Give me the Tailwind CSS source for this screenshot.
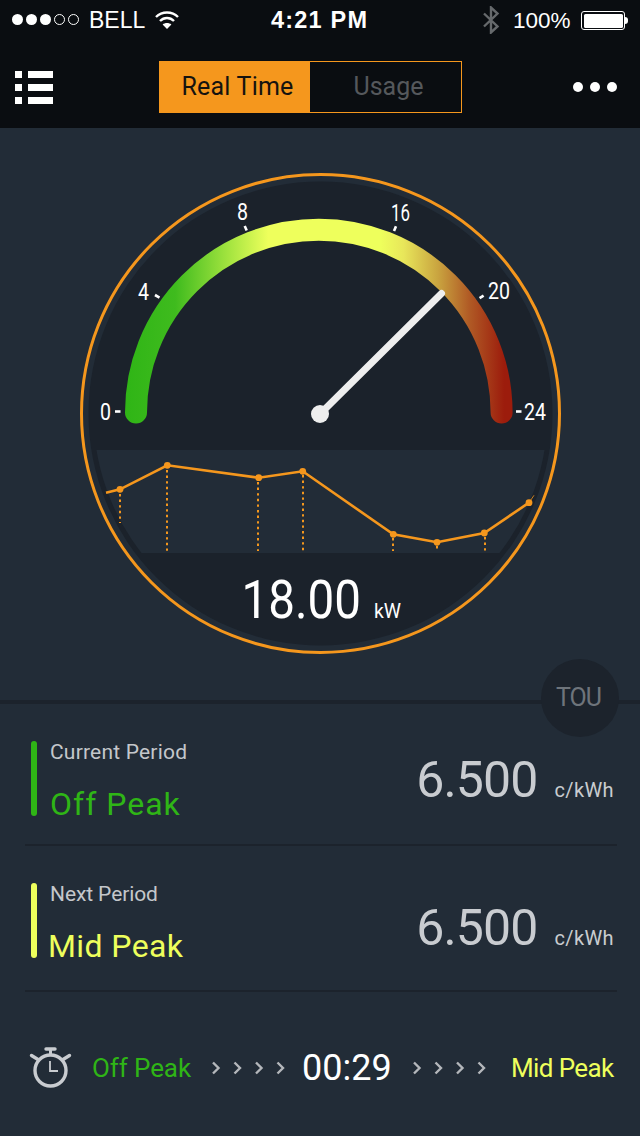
<!DOCTYPE html>
<html lang="en">

<head>
    <meta charset="UTF-8">
    <meta name="viewport" content="width=device-width, initial-scale=1.0">
    <title>Energy Monitor</title>
    <script src="https://cdn.jsdelivr.net/npm/@tailwindcss/browser@4"></script>
</head>

<body class="bg-[#222c37]">
    <div class="w-[640px] h-[1136px] flex flex-col overflow-hidden font-['Roboto',sans-serif]">

        <!-- status bar + nav -->
        <header class="h-[128px] bg-[#0a0d11] text-white">
            <div class="h-[41px] relative font-['Liberation_Sans',sans-serif] text-[22px] leading-[41px]">
                <div class="absolute left-[12px] top-[14px] flex gap-[3px]">
                    <span class="w-[11px] h-[11px] rounded-full bg-white"></span>
                    <span class="w-[11px] h-[11px] rounded-full bg-white"></span>
                    <span class="w-[11px] h-[11px] rounded-full bg-white"></span>
                    <span class="w-[11px] h-[11px] rounded-full border border-white"></span>
                    <span class="w-[11px] h-[11px] rounded-full border border-white"></span>
                </div>
                <span class="absolute left-[89px] top-0 text-[23px]">BELL</span>
                <svg class="absolute left-[154px] top-[10px]" width="26" height="20" viewBox="0 0 26 20">
                    <g fill="none" stroke="#fff" stroke-width="2.4">
                        <path d="M2 7 C8 1 18 1 24 7" />
                        <path d="M6 11 C10 7 16 7 20 11" />
                    </g>
                    <path d="M13 19 L8.6 14.4 C11 12.4 15 12.4 17.4 14.4 Z" fill="#fff" />
                </svg>
                <span class="absolute left-[271px] top-0 font-bold text-[23.5px] tracking-[1.2px]">4:21 PM</span>
                <svg class="absolute left-[482px] top-[6px]" width="18" height="28" viewBox="0 0 18 28">
                    <path d="M2 7.5 L15.5 20.5 L9 26.5 L9 1.5 L15.5 7.5 L2 20.5" fill="none" stroke="#66696c" stroke-width="2.4" />
                </svg>
                <span class="absolute left-[513px] top-0 text-[22.5px]">100%</span>
                <div class="absolute left-[581px] top-[11px] flex items-center">
                    <div class="w-[44px] h-[19px] rounded-[3px] border border-white p-[1.5px]">
                        <div class="w-full h-full rounded-[1.5px] bg-white"></div>
                    </div>
                    <div class="w-[3px] h-[7px] rounded-r-full bg-white"></div>
                </div>
            </div>
            <div class="h-[87px] relative pl-[159px] pt-[20px]">
                <div class="absolute left-[15px] top-[30px] grid grid-cols-[7px_25px] gap-x-[6px] gap-y-[6px]">
                    <span class="h-[7px] bg-white"></span><span class="h-[7px] bg-white"></span>
                    <span class="h-[7px] bg-white"></span><span class="h-[7px] bg-white"></span>
                    <span class="h-[7px] bg-white"></span><span class="h-[7px] bg-white"></span>
                </div>
                <div class="w-[303px] h-[52px] flex border border-[#f5971d] text-[25px]">
                    <div class="w-[150px] pl-[5px] bg-[#f5971d] text-[#15130f] flex items-center justify-center tracking-[0.2px]">Real Time</div>
                    <div class="flex-1 pl-[6px] text-[#55585c] flex items-center justify-center">Usage</div>
                </div>
                <div class="absolute left-[573px] top-[41px] flex gap-[7px]">
                    <span class="w-[10px] h-[10px] rounded-full bg-white"></span>
                    <span class="w-[10px] h-[10px] rounded-full bg-white"></span>
                    <span class="w-[10px] h-[10px] rounded-full bg-white"></span>
                </div>
            </div>
        </header>

        <!-- gauge -->
        <section class="h-[572px]">
            <svg class="block" width="640" height="572" viewBox="0 128 640 572">
                <defs>
                    <linearGradient id="arcGrad" gradientUnits="userSpaceOnUse" x1="125" y1="0" x2="512" y2="0">
                        <stop offset="0" stop-color="#2fb516" />
                        <stop offset="0.13" stop-color="#3fbb1e" />
                        <stop offset="0.27" stop-color="#a5e540" />
                        <stop offset="0.37" stop-color="#eeff5c" />
                        <stop offset="0.66" stop-color="#eeff5c" />
                        <stop offset="0.72" stop-color="#e8e65a" />
                        <stop offset="0.81" stop-color="#c9a33f" />
                        <stop offset="0.89" stop-color="#b05a25" />
                        <stop offset="0.98" stop-color="#9c1c0c" />
                    </linearGradient>
                    <clipPath id="bandClip">
                        <circle cx="320.5" cy="413.5" r="227" />
                    </clipPath>
                </defs>

                <circle cx="320.5" cy="413.5" r="239" fill="#222c37" stroke="#f5971d" stroke-width="3" />
                <circle cx="320.5" cy="413.5" r="232" fill="#1b222b" />
                <rect x="80" y="450" width="480" height="103" fill="#222c37" clip-path="url(#bandClip)" />

                <path d="M136 412.5 A182.8 182.8 0 0 1 501.6 412.5" fill="none" stroke="url(#arcGrad)" stroke-width="22" stroke-linecap="round" />

                <g stroke="#fff" stroke-width="2.6">
                    <path d="M115 411.5 H120.5" />
                    <path d="M155 295 L159.5 297.6" />
                    <path d="M244.7 226 L246.7 230.6" />
                    <path d="M396 226.3 L394 231" />
                    <path d="M483.6 295.6 L479.6 298.2" />
                    <path d="M516 411.5 H521.5" />
                </g>

                <g fill="#fff" font-family="Roboto, sans-serif" font-size="23">
                    <text x="100" y="420" textLength="11" lengthAdjust="spacingAndGlyphs">0</text>
                    <text x="138" y="300" textLength="11" lengthAdjust="spacingAndGlyphs">4</text>
                    <text x="237" y="220" textLength="11" lengthAdjust="spacingAndGlyphs">8</text>
                    <text x="391" y="221" textLength="19" lengthAdjust="spacingAndGlyphs">16</text>
                    <text x="488" y="299" textLength="22" lengthAdjust="spacingAndGlyphs">20</text>
                    <text x="524" y="420" textLength="22" lengthAdjust="spacingAndGlyphs">24</text>
                </g>

                <path d="M320 414 L441.5 293.5" stroke="#eeeeee" stroke-width="7" stroke-linecap="round" />
                <circle cx="320" cy="414" r="9" fill="#eeeeee" />

                <g fill="none" stroke="#f5971d" stroke-width="2" stroke-dasharray="2.4 3.2">
                    <path d="M120 494 V523" />
                    <path d="M167 470 V551" />
                    <path d="M258 482 V551" />
                    <path d="M303 475 V551" />
                    <path d="M393 538 V551" />
                    <path d="M437 546 V551" />
                    <path d="M485 537 V551" />
                </g>
                <polyline points="106,492.7 120,489.3 167.3,465.3 258.7,477.7 302.7,471.3 393.3,534.3 437,542.3 484.3,533 529,502.7" fill="none" stroke="#f5971d" stroke-width="2.6" />
                <path d="M529 502.7 L534 495.3" stroke="#f5971d" stroke-width="0.8" />
                <g fill="#f5971d">
                    <circle cx="120" cy="489.3" r="3.4" />
                    <circle cx="167.3" cy="465.3" r="3.4" />
                    <circle cx="258.7" cy="477.7" r="3.4" />
                    <circle cx="302.7" cy="471.3" r="3.4" />
                    <circle cx="393.3" cy="534.3" r="3.4" />
                    <circle cx="437" cy="542.3" r="3.4" />
                    <circle cx="484.3" cy="533" r="3.4" />
                    <circle cx="529" cy="502.7" r="3.4" />
                </g>

                <g fill="#fff" font-family="Roboto, sans-serif">
                    <text transform="translate(241.5 618) scale(0.88 1)" font-size="54">18.00</text>
                    <text x="374" y="618" font-size="21" textLength="27" lengthAdjust="spacingAndGlyphs">kW</text>
                </g>
            </svg>
        </section>

        <!-- periods -->
        <section class="relative border-t-4 border-[#1c232c] pl-[25px] pr-[23px] flex-1 flex flex-col">
            <div class="absolute left-[541px] top-[-45px] w-[78px] h-[78px] pr-[3px] rounded-full bg-[#1c232c] flex items-center justify-center text-[25px] text-[#6e747b] tracking-[-1px]">TOU</div>

            <div class="h-[142px] border-b-2 border-[#1c232c] flex items-start justify-between pl-[6px] pr-[3px] pt-[37px]">
                <div class="flex h-[75px] gap-[13px]">
                    <span class="w-[6px] rounded-full bg-[#2fb516]"></span>
                    <div class="flex flex-col justify-between">
                        <p class="text-[21px] leading-[23px] text-[#c4c7cb] tracking-[0.2px]">Current Period</p>
                        <p class="text-[32px] leading-[24px] text-[#2fb516] tracking-[1px]">Off Peak</p>
                    </div>
                </div>
                <div class="mt-[14px] flex items-baseline gap-[17px] text-[#c9ccd0]">
                    <span class="text-[50px] leading-none tracking-[-0.9px]">6.500</span>
                    <span class="text-[20px] leading-none tracking-[0.4px]">c/kWh</span>
                </div>
            </div>

            <div class="h-[146px] border-b-2 border-[#1c232c] flex items-start justify-between pl-[6px] pr-[3px] pt-[37px]">
                <div class="flex h-[75px] gap-[11px]">
                    <span class="w-[6px] rounded-full bg-[#eeff5c]"></span>
                    <div class="flex flex-col justify-between">
                        <p class="pl-[2px] text-[21px] leading-[23px] text-[#c4c7cb] tracking-[-0.1px]">Next Period</p>
                        <p class="text-[32px] leading-[24px] text-[#eeff5c] tracking-[0.4px]">Mid Peak</p>
                    </div>
                </div>
                <div class="mt-[20px] flex items-baseline gap-[17px] text-[#c9ccd0]">
                    <span class="text-[50px] leading-none tracking-[-0.9px]">6.500</span>
                    <span class="text-[20px] leading-none tracking-[0.4px]">c/kWh</span>
                </div>
            </div>

            <!-- countdown -->
            <div class="flex-1 flex items-center pt-[8px] text-[26px] whitespace-nowrap">
                <svg class="ml-[3px] shrink-0" width="44" height="42" viewBox="0 0 44 42">
                    <g fill="none" stroke="#c9ccd0">
                        <circle cx="22.5" cy="23.5" r="15.5" stroke-width="3.4" />
                        <path d="M22.5 8 V3" stroke-width="3" />
                        <path d="M18 2 H27" stroke-width="3.4" stroke-linecap="round" />
                        <path d="M3.5 8.5 L10 12.5" stroke-width="3.4" stroke-linecap="round" />
                        <path d="M41.5 8.5 L35 12.5" stroke-width="3.4" stroke-linecap="round" />
                        <path d="M22 14 V24 H30" stroke-width="1.8" />
                    </g>
                </svg>
                <span class="ml-[20px] w-[120px] shrink-0 text-[#2fb516] tracking-[-0.1px]">Off Peak</span>
                <svg class="shrink-0" width="74" height="14" viewBox="0 0 74 14">
                    <g fill="none" stroke="#b4b7bb" stroke-width="2.4">
                        <path d="M1 1.5 L6.5 7 L1 12.5" />
                        <path d="M22.5 1.5 L28 7 L22.5 12.5" />
                        <path d="M44 1.5 L49.5 7 L44 12.5" />
                        <path d="M65.5 1.5 L71 7 L65.5 12.5" />
                    </g>
                </svg>
                <span class="ml-[16px] w-[111px] shrink-0 text-[36px] text-white">00:29</span>
                <svg class="shrink-0" width="74" height="14" viewBox="0 0 74 14">
                    <g fill="none" stroke="#b4b7bb" stroke-width="2.4">
                        <path d="M1 1.5 L6.5 7 L1 12.5" />
                        <path d="M22.5 1.5 L28 7 L22.5 12.5" />
                        <path d="M44 1.5 L49.5 7 L44 12.5" />
                        <path d="M65.5 1.5 L71 7 L65.5 12.5" />
                    </g>
                </svg>
                <span class="ml-[24px] text-[#eeff5c] tracking-[-0.6px]">Mid Peak</span>
            </div>
        </section>
    </div>
</body>

</html>
